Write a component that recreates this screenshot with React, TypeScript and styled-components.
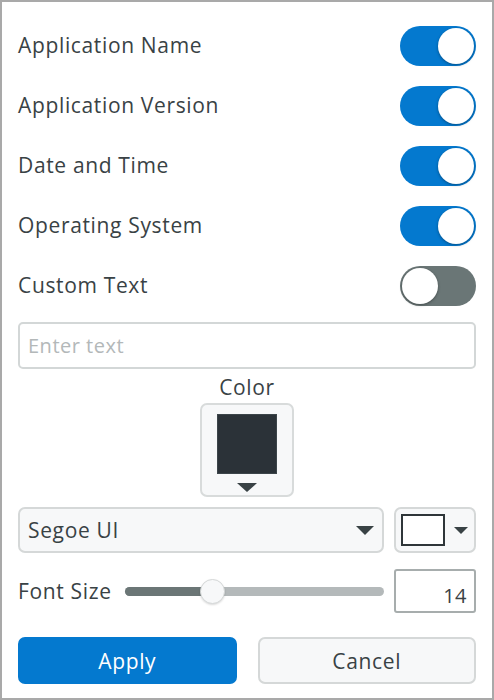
import React, { useState } from "react";
import styled, { createGlobalStyle } from "styled-components";

const GlobalStyle = createGlobalStyle`
  html, body {
    margin: 0;
    padding: 0;
    background: #ffffff;
  }
  * {
    box-sizing: border-box;
  }
`;

const Panel = styled.div`
  width: 494px;
  height: 700px;
  border: 2px solid #a9a9a9;
  padding: 13px 16px 0 16px;
  font-family: "Open Sans", "Liberation Sans", sans-serif;
  letter-spacing: 0.65px;
  color: #394245;
  display: flex;
  flex-direction: column;
  background: #fff;
`;

const ToggleRow = styled.div`
  height: 60px;
  display: flex;
  align-items: center;
  justify-content: space-between;
`;

const RowLabel = styled.span`
  font-size: 21px;
  line-height: 24px;
`;

const Track = styled.button<{ $on: boolean }>`
  position: relative;
  width: 76px;
  height: 40px;
  border: none;
  border-radius: 20px;
  padding: 0;
  margin-top: 2px;
  cursor: pointer;
  background: ${(p) => (p.$on ? "#0479cf" : "#6a7676")};
`;

const Knob = styled.span<{ $on: boolean }>`
  position: absolute;
  top: 2px;
  left: ${(p) => (p.$on ? "38px" : "2px")};
  width: 36px;
  height: 36px;
  border-radius: 50%;
  background: #fff;
  box-shadow: 0 1px 3px rgba(0, 0, 0, 0.35);
`;

const TextInput = styled.input`
  margin-top: 7px;
  height: 47px;
  width: 100%;
  border: 2px solid #d3d7d7;
  border-radius: 5px;
  padding: 0 8px;
  font-family: inherit;
  font-size: 20px;
  letter-spacing: 0.5px;
  color: #394245;
  outline: none;
  &::placeholder {
    color: #b3b8b9;
  }
`;

const ColorLabel = styled.div`
  margin-top: 6px;
  text-align: center;
  font-size: 21px;
  line-height: 24px;
`;

const BigSwatchButton = styled.button`
  align-self: center;
  margin-top: 4px;
  width: 94px;
  height: 94px;
  background: #f7f8f9;
  border: 2px solid #d8dbdb;
  border-radius: 7px;
  padding: 9px 0 0 0;
  display: flex;
  flex-direction: column;
  align-items: center;
  cursor: pointer;
`;

const Swatch = styled.span<{ $color: string }>`
  width: 60px;
  height: 60px;
  background: ${(p) => p.$color};
  border: 1px solid #3c454a;
`;

const Caret = styled.span<{ $w: number; $h: number }>`
  width: 0;
  height: 0;
  border-left: ${(p) => p.$w / 2}px solid transparent;
  border-right: ${(p) => p.$w / 2}px solid transparent;
  border-top: ${(p) => p.$h}px solid #394245;
`;

const BigCaret = styled(Caret)`
  margin-top: 9px;
`;

const ControlRow = styled.div<{ $top: number }>`
  margin-top: ${(p) => p.$top}px;
  display: flex;
  align-items: center;
  gap: 10px;
`;

const SelectBox = styled.button`
  flex: 1;
  height: 46px;
  background: #f7f8f9;
  border: 2px solid #d5d8d8;
  border-radius: 7px;
  padding: 0 8px 0 8px;
  display: flex;
  align-items: center;
  justify-content: space-between;
  font-family: inherit;
  font-size: 21px;
  letter-spacing: 0.65px;
  color: #394245;
  cursor: pointer;
`;

const SmallPicker = styled.button`
  width: 82px;
  height: 46px;
  background: #f7f8f9;
  border: 2px solid #d5d8d8;
  border-radius: 7px;
  padding: 0 6px 0 5px;
  display: flex;
  align-items: center;
  justify-content: space-between;
  cursor: pointer;
`;

const SmallSwatch = styled.span`
  width: 44px;
  height: 32px;
  background: #fff;
  border: 2px solid #2f3639;
`;

const SliderLabel = styled.span`
  font-size: 21px;
  line-height: 24px;
  white-space: nowrap;
`;

const SliderTrack = styled.div`
  position: relative;
  flex: 1;
  height: 9px;
  margin-left: 3px;
  border-radius: 5px;
  background: #b4b9ba;
`;

const SliderFill = styled.div`
  height: 100%;
  border-radius: 5px;
  background: #6b7676;
`;

const SliderThumb = styled.span`
  position: absolute;
  top: 50%;
  width: 25px;
  height: 25px;
  margin: -12.5px 0 0 -12.5px;
  border-radius: 50%;
  background: #f7f8f9;
  border: 1px solid #d5d8d8;
  box-shadow: 0 1px 2px rgba(0, 0, 0, 0.15);
`;

const NumberBox = styled.input`
  width: 82px;
  height: 44px;
  border: 2px solid #a7adad;
  border-radius: 3px;
  padding: 8px 7px 0 0;
  text-align: right;
  font-family: inherit;
  font-size: 20px;
  letter-spacing: 0.5px;
  color: #394245;
  outline: none;
`;

const ButtonRow = styled.div`
  margin-top: 24px;
  display: flex;
  gap: 21px;
`;

const ActionButton = styled.button<{ $primary?: boolean }>`
  flex: 1;
  height: 47px;
  border-radius: 7px;
  font-family: inherit;
  font-size: 21px;
  letter-spacing: 0.65px;
  cursor: pointer;
  background: ${(p) => (p.$primary ? "#0479cf" : "#f7f8f9")};
  color: ${(p) => (p.$primary ? "#ffffff" : "#394245")};
  border: 2px solid ${(p) => (p.$primary ? "#0479cf" : "#d5d8d8")};
`;

const items = [
  { label: "Application Name", on: true },
  { label: "Application Version", on: true },
  { label: "Date and Time", on: true },
  { label: "Operating System", on: true },
  { label: "Custom Text", on: false },
];

const App = () => {
  const [toggles, setToggles] = useState(items.map((i) => i.on));
  const [size, setSize] = useState(14);
  const pct = 34;

  return (
    <>
      <GlobalStyle />
      <Panel>
        {items.map((item, i) => (
          <ToggleRow key={item.label}>
            <RowLabel>{item.label}</RowLabel>
            <Track
              $on={toggles[i]}
              onClick={() => setToggles(toggles.map((t, j) => (j === i ? !t : t)))}
            >
              <Knob $on={toggles[i]} />
            </Track>
          </ToggleRow>
        ))}
        <TextInput placeholder="Enter text" />
        <ColorLabel>Color</ColorLabel>
        <BigSwatchButton>
          <Swatch $color="#2b3238" />
          <BigCaret $w={20} $h={9} />
        </BigSwatchButton>
        <ControlRow $top={10}>
          <SelectBox>
            <span>Segoe UI</span>
            <Caret $w={18} $h={9} />
          </SelectBox>
          <SmallPicker>
            <SmallSwatch />
            <Caret $w={14} $h={7} />
          </SmallPicker>
        </ControlRow>
        <ControlRow $top={16}>
          <SliderLabel>Font Size</SliderLabel>
          <SliderTrack>
            <SliderFill style={{ width: `${pct}%` }} />
            <SliderThumb style={{ left: `${pct}%` }} />
          </SliderTrack>
          <NumberBox
            value={size}
            onChange={(e) => setSize(Number(e.target.value) || 0)}
          />
        </ControlRow>
        <ButtonRow>
          <ActionButton $primary>Apply</ActionButton>
          <ActionButton>Cancel</ActionButton>
        </ButtonRow>
      </Panel>
    </>
  );
};

export default App;
